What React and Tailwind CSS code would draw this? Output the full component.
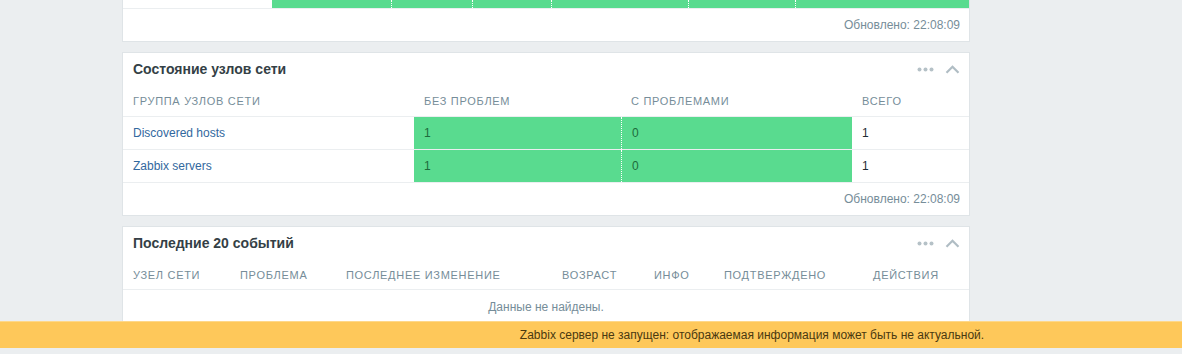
import React from 'react';

const font = { fontFamily: '"Liberation Sans", Arial, sans-serif' };

const WidgetIcons = () => (
    <div className="flex items-center gap-[11px] pr-[9px]">
        <svg width="17" height="5" viewBox="0 0 17 5" className="fill-[#b5c1c7]">
            <circle cx="2.5" cy="2.5" r="2" />
            <circle cx="8.5" cy="2.5" r="2" />
            <circle cx="14.5" cy="2.5" r="2" />
        </svg>
        <svg width="15" height="9" viewBox="0 0 15 9" fill="none" className="stroke-[#b0bdc4]">
            <path d="M1.5 7.8 L7.5 1.8 L13.5 7.8" strokeWidth="2.2" />
        </svg>
    </div>
);

const WidgetHeader = ({ title }) => (
    <div className="h-[32px] flex items-center justify-between pl-[10px]">
        <h4 className="text-[14px] font-bold text-[#343f46]">{title}</h4>
        <WidgetIcons />
    </div>
);

const Th = ({ children, className = '' }) => (
    <div className={`pl-[10px] text-[11px] tracking-[0.7px] uppercase text-[#768d99] ${className}`}>{children}</div>
);

const Footer = () => (
    <div className="h-[32px] flex items-center justify-end pr-[9px] text-[12px] text-[#768d99]">
        Обновлено: 22:08:09
    </div>
);

const hostGroups = [
    { name: 'Discovered hosts', ok: 1, problems: 0, total: 1 },
    { name: 'Zabbix servers', ok: 1, problems: 0, total: 1 },
];

const App = () => {
    return (
        <div className="h-[354px] overflow-hidden bg-[#ebeef0] pl-[122px]" style={font}>
            {/* panel cut off at top */}
            <div className="w-[848px] bg-white border-x border-b border-[#dfe4e7]">
                <div className="flex h-[9px] border-b border-[#ebeef0]">
                    <div className="w-[149px]"></div>
                    <div className="w-[119px] bg-[#59db8f]"></div>
                    <div className="w-[81px] bg-[#59db8f] border-l border-dotted border-white"></div>
                    <div className="w-[79px] bg-[#59db8f] border-l border-dotted border-white"></div>
                    <div className="w-[137px] bg-[#59db8f] border-l border-dotted border-white"></div>
                    <div className="w-[107px] bg-[#59db8f] border-l border-dotted border-white"></div>
                    <div className="flex-1 bg-[#59db8f] border-l border-dotted border-white"></div>
                </div>
                <Footer />
            </div>

            {/* host groups status */}
            <div className="mt-[10px] w-[848px] bg-white border border-[#dfe4e7]">
                <WidgetHeader title="Состояние узлов сети" />
                <div className="flex items-center h-[32px] pt-[2px] border-b border-[#ebeef0]">
                    <Th className="w-[291px]">Группа узлов сети</Th>
                    <Th className="w-[207px]">Без проблем</Th>
                    <Th className="w-[231px]">С проблемами</Th>
                    <Th className="flex-1">Всего</Th>
                </div>
                {hostGroups.map((g) => (
                    <div key={g.name} className="flex h-[33px] border-b border-[#ebeef0] text-[12px]">
                        <div className="w-[291px] pl-[10px] flex items-center text-[#32689e]">{g.name}</div>
                        <div className="w-[207px] pl-[10px] flex items-center bg-[#59db8f] text-[#1d6b3c]">{g.ok}</div>
                        <div className="w-[231px] pl-[10px] flex items-center bg-[#59db8f] text-[#1d6b3c] border-l border-dotted border-white">{g.problems}</div>
                        <div className="flex-1 pl-[10px] flex items-center text-[#1f2c33]">{g.total}</div>
                    </div>
                ))}
                <Footer />
            </div>

            {/* last 20 events */}
            <div className="mt-[10px] w-[848px] bg-white border border-[#dfe4e7]">
                <WidgetHeader title="Последние 20 событий" />
                <div className="flex items-center h-[31px] pt-[3px] border-b border-[#ebeef0]">
                    <Th className="w-[107px]">Узел сети</Th>
                    <Th className="w-[106px]">Проблема</Th>
                    <Th className="w-[216px]">Последнее изменение</Th>
                    <Th className="w-[92px]">Возраст</Th>
                    <Th className="w-[70px]">Инфо</Th>
                    <Th className="w-[149px]">Подтверждено</Th>
                    <Th className="flex-1">Действия</Th>
                </div>
                <div className="h-[33px] flex items-center justify-center text-[12px] text-[#768d99]">
                    Данные не найдены.
                </div>
            </div>

            {/* global message */}
            <div className="fixed left-0 right-0 bottom-[6px] h-[27px] bg-[#fec85a] border-t border-[#fed88a] flex items-center justify-center pl-[322px] text-[12px] text-[#4a3910]">
                Zabbix сервер не запущен: отображаемая информация может быть не актуальной.
            </div>
        </div>
    );
};

export default App;
